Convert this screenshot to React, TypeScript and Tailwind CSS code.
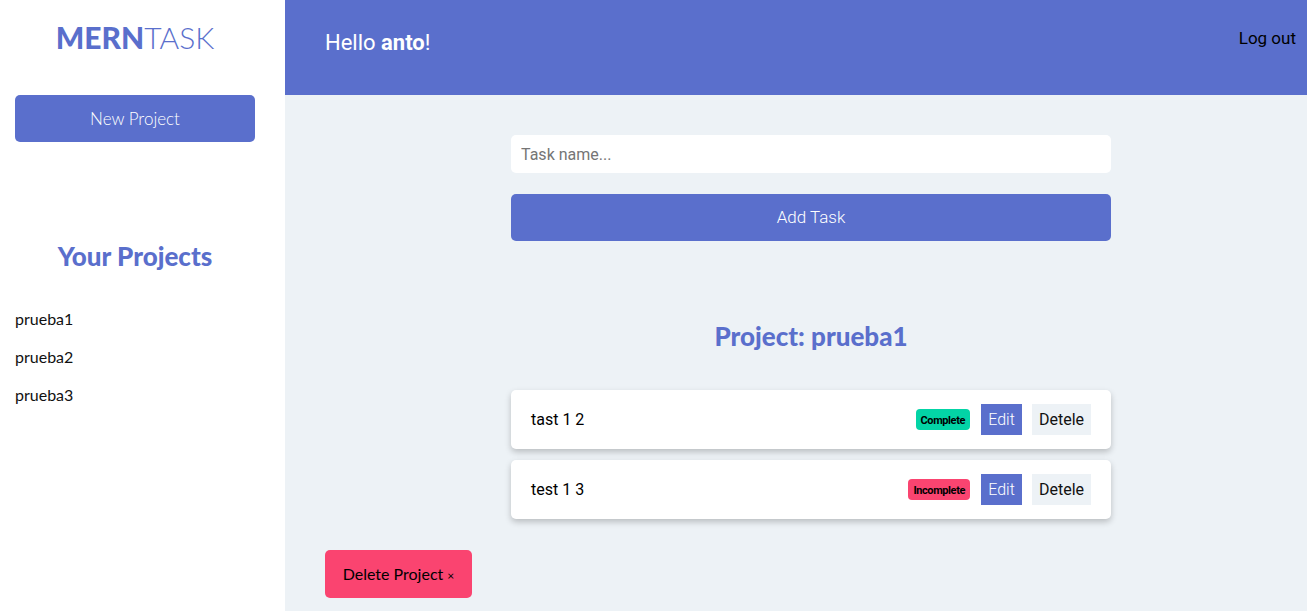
import React from "react";

const BLUE = "bg-[#5a6fcc]";

function TaskRow({ name, done }: { name: string; done: boolean }) {
  return (
    <li className="flex h-[59px] items-center justify-between rounded-[5px] bg-white px-5 shadow-[0_3px_6px_rgba(0,0,0,0.22)]">
      <span className="text-[16px] text-black">{name}</span>
      <div className="flex items-center">
        <span
          className={`mr-[11px] flex h-[21px] items-center justify-center rounded-[4px] px-[5px] pt-[1px] text-[11px] font-bold leading-none tracking-[-0.4px] text-black ${
            done ? "bg-[#03d4a6]" : "bg-[#fa4470]"
          }`}
        >
          {done ? "Complete" : "Incomplete"}
        </span>
        <button className="mr-[10px] flex h-[31px] w-[41px] items-center justify-center bg-[#5a6fcc] text-[16px] font-light text-white">
          Edit
        </button>
        <button className="flex h-[31px] w-[59px] items-center justify-center bg-[#edf2f6] text-[16px] font-normal text-[#111]">
          Detele
        </button>
      </div>
    </li>
  );
}

export default function App() {
  const raleway = { fontFamily: "Lato, 'Noto Sans', sans-serif" };
  return (
    <div className="flex h-[611px] w-full overflow-hidden font-['Roboto',sans-serif]">
      <aside className="flex w-[285px] shrink-0 flex-col bg-white pl-[15px] pr-[30px]" style={raleway}>
        <h1 className="mt-[19px] text-center text-[30px] leading-[36px] text-[#5a6fcc]">
          <span className="font-black">MERN</span>
          <span className="font-light">TASK</span>
        </h1>
        <button className={`mt-[40px] h-[47px] w-full rounded-[5px] ${BLUE} text-[17px] font-light text-white`}>
          New Project
        </button>
        <h2 className="mt-[98px] text-center text-[26px] font-black leading-[32px] text-[#5a6fcc]">
          Your Projects
        </h2>
        <ul className="mt-[37px] flex flex-col gap-[18px] text-[16px] text-[#111]">
          <li className="leading-[20px]">prueba1</li>
          <li className="leading-[20px]">prueba2</li>
          <li className="leading-[20px]">prueba3</li>
        </ul>
      </aside>
      <main className="flex flex-1 flex-col bg-[#edf2f6]">
        <header className={`flex h-[95px] items-center justify-between ${BLUE} pl-10 pr-[11px]`}>
          <p className="mb-[10px] text-[22px] text-white">
            Hello <span className="font-bold">anto</span>!
          </p>
          <button className="mb-[18px] text-[17px] text-black">Log out</button>
        </header>
        <div className="flex flex-1 flex-col pl-10 pr-[10px]">
          <div className="mx-auto mt-10 w-[600px]">
            <input
              type="text"
              placeholder="Task name..."
              className="h-[38px] w-full rounded-[5px] bg-white px-[10px] text-[16px] text-black outline-none placeholder:text-[#757575]"
            />
            <button className={`mt-[21px] h-[47px] w-full rounded-[5px] ${BLUE} text-[17px] font-light text-white`}>
              Add Task
            </button>
            <h2
              className="mt-[79px] text-center text-[26px] font-black leading-[32px] text-[#5a6fcc]"
              style={raleway}
            >
              Project: prueba1
            </h2>
            <ul className="mt-[38px] flex flex-col gap-[11px]">
              <TaskRow name="tast 1 2" done={true} />
              <TaskRow name="test 1 3" done={false} />
            </ul>
          </div>
          <div className="mt-[31px]">
            <button
              className="h-[48px] w-[147px] rounded-[5px] bg-[#fa4470] text-[16px] text-black"
              style={raleway}
            >
              Delete Project <span className="text-[12px]">×</span>
            </button>
          </div>
        </div>
      </main>
    </div>
  );
}
